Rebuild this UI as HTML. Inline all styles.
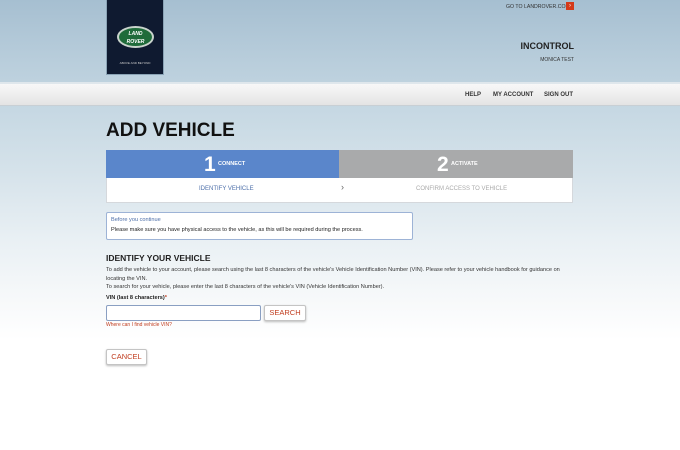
<!DOCTYPE html>
<html><head><meta charset="utf-8"><style>
*{margin:0;padding:0;box-sizing:border-box}
body{width:680px;height:450px;overflow:hidden;position:relative;font-family:"Liberation Sans",sans-serif;
background:linear-gradient(180deg,#a6bfd1 0px,#b8cddb 60px,#c6d8e3 110px,#d5e2ea 170px,#e9f0f4 240px,#f7f9fa 300px,#fff 340px)}
.a{position:absolute}
.logo{left:106px;top:0;width:58px;height:75px;background:#0f1a30;border:1px solid #8aa3b5;border-top:none}
.oval{left:10px;top:26px;width:37px;height:22px;border-radius:50%;background:#1f6b3a;border:2px solid #c9d3cc;color:#fff;font-size:5px;font-weight:bold;font-style:italic;text-align:center;line-height:8px;padding-top:2px}
.nav{left:0;top:82px;width:680px;height:24px;background:linear-gradient(#f8f8f8,#e4e4e4);border-top:2px solid #dfe7ec;border-bottom:1px solid #c8cfd4}
.nav span{position:absolute;top:8px;font-size:6px;font-weight:bold;color:#333}
.step{top:150px;height:28px;color:#fff}
.step b{position:absolute;font-size:21px;top:3px;font-weight:bold}
.step i{position:absolute;font-style:normal;font-size:5.5px;top:11px;font-weight:bold}
.sub{left:106px;top:178px;width:467px;height:25px;background:#fff;border:1px solid #d5d8dc;border-top:none;font-size:6px}
.btn{background:#fff;border:1px solid #c4c4c4;border-radius:2px;box-shadow:0 1px 2px #bbb;color:#c03c1e;font-size:7.5px;text-align:center}
.t{font-size:5.6px;color:#333}
</style></head><body>
<div class="a logo"><div class="a oval">LAND<br>ROVER</div><div class="a" style="left:0;width:56px;top:61px;font-size:3px;color:#ccc;text-align:center">ABOVE AND BEYOND</div></div>
<div class="a" style="left:506px;top:4px;font-size:5.2px;color:#333">GO TO LANDROVER.COM</div>
<div class="a" style="left:566px;top:2px;width:8px;height:8px;background:#d43a1a;color:#fff;font-size:6px;text-align:center;line-height:8px">›</div>
<div class="a" style="left:520px;top:41px;width:54px;text-align:right;font-size:9px;font-weight:bold;color:#222">INCONTROL</div>
<div class="a" style="left:520px;top:57px;width:54px;text-align:right;font-size:5px;color:#333">MONICA TEST</div>
<div class="a nav"><span style="left:465px">HELP</span><span style="left:493px">MY ACCOUNT</span><span style="left:544px">SIGN OUT</span></div>
<div class="a" style="left:106px;top:120px;font-size:19px;font-weight:bold;color:#111">ADD VEHICLE</div>
<div class="a step" style="left:106px;width:233px;background:#5a86cb"><b style="left:98px">1</b><i style="left:112px">CONNECT</i></div>
<div class="a step" style="left:339px;width:234px;background:#a9aaab"><b style="left:98px">2</b><i style="left:112px">ACTIVATE</i></div>
<div class="a sub"><span class="a" style="left:92px;top:8px;color:#4d6fa9">IDENTIFY VEHICLE</span><span class="a" style="left:234px;top:4px;color:#666;font-size:9px">›</span><span class="a" style="left:309px;top:8px;color:#aaa">CONFIRM ACCESS TO VEHICLE</span></div>
<div class="a" style="left:106px;top:212px;width:307px;height:28px;background:#fff;border:1px solid #9db3d6;border-radius:2px">
<div class="a" style="left:4px;top:4px;font-size:5.6px;color:#4d6fa9">Before you continue</div>
<div class="a t" style="left:4px;top:14px;color:#222">Please make sure you have physical access to the vehicle, as this will be required during the process.</div></div>
<div class="a" style="left:106px;top:253px;font-size:8.5px;font-weight:bold;color:#222">IDENTIFY YOUR VEHICLE</div>
<div class="a t" style="left:106px;top:266px;width:470px;line-height:8.5px">To add the vehicle to your account, please search using the last 8 characters of the vehicle's Vehicle Identification Number (VIN). Please refer to your vehicle handbook for guidance on locating the VIN.<br>To search for your vehicle, please enter the last 8 characters of the vehicle's VIN (Vehicle Identification Number).</div>
<div class="a" style="left:106px;top:295px;font-size:5.6px;font-weight:bold;color:#222">VIN (last 8 characters)<span style="color:#c03c1e">*</span></div>
<div class="a" style="left:106px;top:305px;width:155px;height:16px;background:#fff;border:1px solid #8a9fc2;border-radius:2px"></div>
<div class="a btn" style="left:264px;top:305px;width:42px;height:16px;line-height:14px">SEARCH</div>
<div class="a" style="left:106px;top:322px;font-size:5px;color:#c03c1e">Where can I find vehicle VIN?</div>
<div class="a btn" style="left:106px;top:349px;width:41px;height:16px;line-height:14px">CANCEL</div>
</body></html>
